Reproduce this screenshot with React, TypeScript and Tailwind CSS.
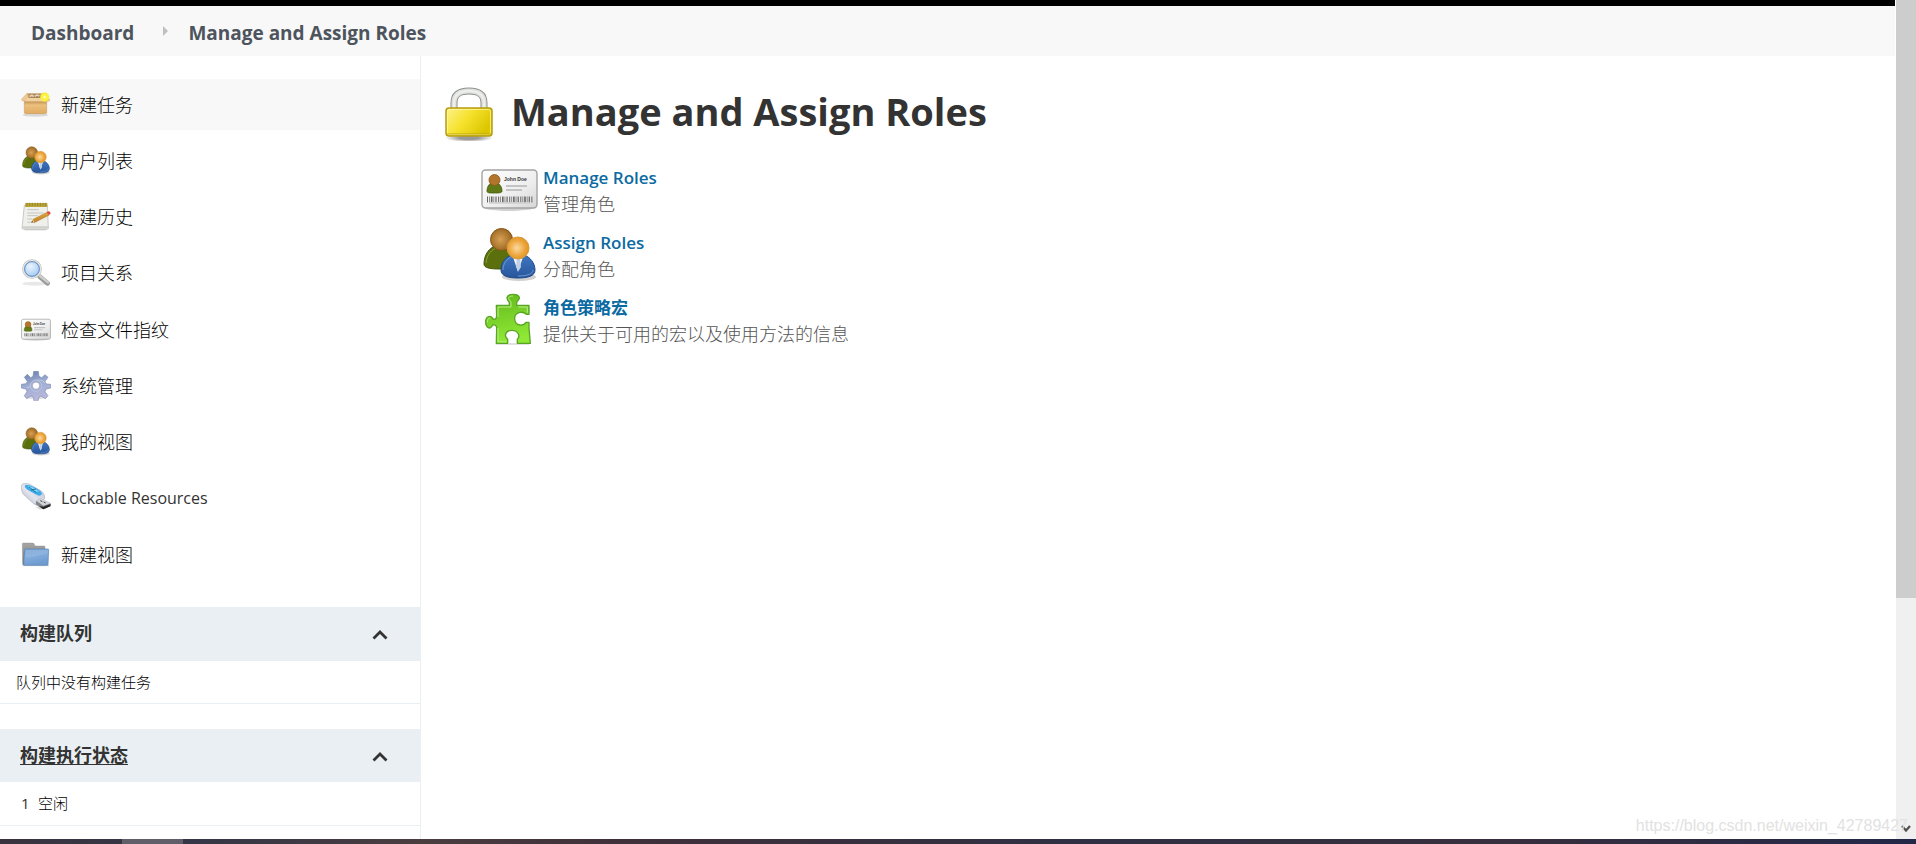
import React from 'react';

const NewItemIcon = () => (
  <svg viewBox="0 0 90 90" className="size-full" aria-hidden="true">
    <defs>
      <linearGradient id="boxFront" x1="0" y1="0" x2="0" y2="1">
        <stop offset="0" stopColor="#c4924f" />
        <stop offset="0.3" stopColor="#ecc07e" />
        <stop offset="1" stopColor="#dfab62" />
      </linearGradient>
      <radialGradient id="boxGlow">
        <stop offset="0" stopColor="#fffde0" />
        <stop offset="0.4" stopColor="#fff23a" />
        <stop offset="0.7" stopColor="#f8ef3c" />
        <stop offset="1" stopColor="#f8ef3c" stopOpacity="0" />
      </radialGradient>
    </defs>
    <ellipse cx="43" cy="75" rx="38" ry="5" fill="#000" opacity="0.12" />
    <path d="M19 10h48l8 22H12z" fill="#cfa066" />
    <path d="M25 12h34l5 12H20z" fill="#a9865c" />
    <path d="M26 20q7-8 12 0M42 19q7-8 13 0" stroke="#e8d9bd" strokeWidth="5" fill="none" />
    <path d="M10 34h67v33q0 4-4 4H14q-4 0-4-4z" fill="url(#boxFront)" stroke="#c39455" strokeWidth="1.5" />
    <path d="M18 10 2 27q-2 5 4 6l6 1 12-9z" fill="#edc896" stroke="#c99b62" />
    <path d="M68 14l18 14q2 5-4 6l-6 1-12-10z" fill="#edc896" stroke="#c99b62" />
    <path d="M20 24h47l8 10H12z" fill="#f2d1a0" />
    <circle cx="71" cy="21" r="16" fill="url(#boxGlow)" />
  </svg>
);

const UsersIcon = () => (
  <svg viewBox="0 0 57 57" className="size-full" aria-hidden="true">
    <defs>
      <radialGradient id="backHead" cx="0.45" cy="0.5" r="0.6">
        <stop offset="0" stopColor="#d9a055" />
        <stop offset="1" stopColor="#92601b" />
      </radialGradient>
      <radialGradient id="frontHead" cx="0.45" cy="0.5" r="0.6">
        <stop offset="0" stopColor="#fbd9a0" />
        <stop offset="0.6" stopColor="#eda63c" />
        <stop offset="1" stopColor="#dd8f1d" />
      </radialGradient>
      <linearGradient id="frontBody" x1="0" y1="0" x2="0" y2="1">
        <stop offset="0" stopColor="#3f78c2" />
        <stop offset="1" stopColor="#28559b" />
      </linearGradient>
    </defs>
    <ellipse cx="38" cy="50" rx="17" ry="4" fill="#000" opacity="0.18" />
    <path d="M3 37c0-10 6-17 12-18h10c6 2 10 8 10 16 0 5-6 7-16 7S3 41 3 37z" fill="#5b6f0d" stroke="#43540a" />
    <path d="M5 36c1-9 6-14 11-15" stroke="#8ca238" fill="none" />
    <circle cx="20.5" cy="12.5" r="11" fill="url(#backHead)" stroke="#855615" />
    <path d="M20 43c0-9 6-14 12-15h11c6 2 11 8 11 15 0 6-7 8-17 8s-17-2-17-8z" fill="url(#frontBody)" stroke="#204a87" />
    <path d="M22 43c0-7 4-11 8-13M52 43c0 4-6 6-15 6" stroke="#6b9ad6" fill="none" />
    <path d="M32 30h10l-5 15z" fill="#f1f4fa" />
    <path d="M36 31h3l1 9-2.500 4-2.500-4z" fill="#c2d0e6" />
    <circle cx="37" cy="21" r="11" fill="url(#frontHead)" stroke="#d99a3c" />
  </svg>
);

const NotepadIcon = () => (
  <svg viewBox="0 0 90 90" className="size-full" aria-hidden="true">
    <defs>
      <linearGradient id="padPencil" x1="0" y1="0" x2="0.4" y2="1">
        <stop offset="0" stopColor="#f2b955" />
        <stop offset="1" stopColor="#b97a1d" />
      </linearGradient>
    </defs>
    <path d="M8 82h70l-4 3H12z" fill="#c4c4c2" />
    <path d="M10 10h69l3 68q0 3-3 3H6q-3 0-3-3z" fill="#efefec" stroke="#b2b2ae" strokeWidth="2" />
    <path d="M4 73h78l1 6H4z" fill="#cfcfcb" />
    <path d="M13 3h66v12H12z" fill="#b9a53c" />
    <path d="M18 2v10M26 2v10M34 2v10M42 2v10M50 2v10M58 2v10M66 2v10M74 2v10" stroke="#8c7a1e" strokeWidth="2" />
    <path d="M19 23h34M19 33h48M19 41h32M19 51h14M19 61h9" stroke="#bcbcba" strokeWidth="2.500" />
    <path d="M32 61l8 1 44-22-5-10-43 22z" fill="url(#padPencil)" stroke="#a5752a" />
    <path d="M30 62l6-10 4 9z" fill="#e8cf9e" />
    <path d="M30 62l4-6 2 4z" fill="#44413a" />
    <path d="M77 31l5-3q6 0 7 6l-5 6z" fill="#dd4a44" />
  </svg>
);

const SearchIcon = () => (
  <svg viewBox="0 0 90 90" className="size-full" aria-hidden="true">
    <defs>
      <radialGradient id="lens" cx="0.4" cy="0.35" r="0.7">
        <stop offset="0" stopColor="#eaf5ff" />
        <stop offset="0.6" stopColor="#bcd8f4" />
        <stop offset="1" stopColor="#94bce8" />
      </radialGradient>
    </defs>
    <ellipse cx="42" cy="77" rx="38" ry="6" fill="#000" opacity="0.09" />
    <path d="M56 56l24 20" stroke="#9a9a98" strokeWidth="14" strokeLinecap="round" />
    <path d="M57 54l24 19" stroke="#cfcfcd" strokeWidth="7" strokeLinecap="round" />
    <circle cx="33" cy="33" r="26" fill="url(#lens)" stroke="#bcbebd" strokeWidth="7" />
    <circle cx="33" cy="33" r="26" fill="none" stroke="#e4e4e2" strokeWidth="4" />
    <circle cx="33" cy="33" r="22" fill="none" stroke="#5c90cc" strokeWidth="3" />
  </svg>
);

const CardIcon = () => (
  <svg viewBox="0 0 57 57" className="size-full" aria-hidden="true">
    <defs>
      <linearGradient id="cardFace" x1="0" y1="0" x2="1" y2="1">
        <stop offset="0" stopColor="#ffffff" />
        <stop offset="0.6" stopColor="#eeeeee" />
        <stop offset="1" stopColor="#d6d6d6" />
      </linearGradient>
    </defs>
    <ellipse cx="28" cy="46" rx="24" ry="3" fill="#000" opacity="0.18" />
    <rect x="1" y="8" width="55" height="38" rx="3.500" fill="url(#cardFace)" stroke="#a3a3a2" strokeWidth="1.400" />
    <path d="M6 29c0-5 3-8 5-8h5c3 1 5 4 5 8 0 2-3 2-8 2s-7 0-7-2z" fill="#5f7a17" stroke="#46590c" strokeWidth="0.800" />
    <circle cx="13.500" cy="18" r="5.500" fill="#b2752b" stroke="#8a5416" strokeWidth="0.800" />
    <text x="23" y="19" fontSize="5" fontWeight="700" fill="#333" fontFamily="Liberation Sans, sans-serif">
      John Doe
    </text>
    <path d="M25 24h21M25 28h16" stroke="#c3c3c3" strokeWidth="2" />
    <path d="M6 37.500h46" stroke="#666" strokeWidth="6" strokeDasharray="1 1.200 0.700 1 1.600 1 0.700 1.200 1.200 1.500" />
    <path d="M8 41h41" stroke="#cfcfcf" strokeWidth="1.500" />
  </svg>
);

const GearIcon = () => (
  <svg viewBox="0 0 90 90" className="size-full" aria-hidden="true">
    <defs>
      <linearGradient id="gearFill" x1="0.2" y1="0" x2="0.5" y2="1">
        <stop offset="0" stopColor="#6580ae" />
        <stop offset="0.45" stopColor="#a0aed4" />
        <stop offset="1" stopColor="#bcb9dd" />
      </linearGradient>
    </defs>
    <ellipse cx="45" cy="78" rx="30" ry="7" fill="#000" opacity="0.12" />
    <path
      d="M38 1h14l2 15 8 4 10-9 9 8-9 12 4 8 13 1v11l-14 3-3 8 9 12-8 9-13-8-6 3-4 15H40l-3-15-7-3-13 8-7-9 8-12-3-8-14-3V40l14-2 4-7-9-12 9-9 10 10 7-4z"
      fill="url(#gearFill)"
      stroke="#808bb0"
      strokeWidth="2"
      strokeLinejoin="round"
    />
    <path d="M17 50c12 2 14-17 30-22 12-3 22 2 26 8" stroke="#dfe5f4" strokeWidth="3" fill="none" opacity="0.5" />
    <circle cx="45" cy="44" r="17" fill="#a4aed2" stroke="#c6cde6" strokeWidth="2" />
    <circle cx="45" cy="44" r="11" fill="#fff" stroke="#8c97bc" strokeWidth="2" />
  </svg>
);

const UsbIcon = () => (
  <svg viewBox="0 0 90 90" className="size-full" aria-hidden="true">
    <defs>
      <linearGradient id="usbBody" x1="0" y1="1" x2="1" y2="0">
        <stop offset="0" stopColor="#a2a7b3" />
        <stop offset="0.45" stopColor="#e2e5ee" />
        <stop offset="1" stopColor="#b6bccb" />
      </linearGradient>
    </defs>
    <path d="M44 72l40-8-6 12-22 4z" fill="#000" opacity="0.15" />
    <path d="M2 6C4 0 16 0 26 4l32 18c8 5 14 14 13 24L55 68c-8 1-17-5-24-12L7 34C1 26 0 12 2 6z" fill="url(#usbBody)" stroke="#a2a8b8" strokeWidth="1.500" />
    <path d="M13 7c8-3 20 2 32 9s20 13 17 18-9 6-18 0L21 21C14 16 9 10 13 7z" fill="#3cabea" />
    <path d="M20 9c12 1 26 10 34 17-10 2-22-2-34-17z" fill="#7fdcfb" />
    <path d="M24 12l22 17M30 21l15-3" stroke="#1b5e8f" strokeWidth="2.500" />
    <path d="M58 46l31 15-1 9-21 9-23-15 2-11z" fill="#83868a" />
    <path d="M58 46l31 15-22 7-21-15z" fill="#d3d5d8" />
    <path d="M53 69l14 2 22-8-1 7-21 9z" fill="#222" />
    <path d="M58 53l6 3M68 57l6 3" stroke="#444" strokeWidth="3" />
  </svg>
);

const FolderIcon = () => (
  <svg viewBox="0 0 90 90" className="size-full" aria-hidden="true">
    <defs>
      <linearGradient id="folderFront" x1="0" y1="0" x2="0.3" y2="1">
        <stop offset="0" stopColor="#7ba7d8" />
        <stop offset="0.5" stopColor="#82acdc" />
        <stop offset="1" stopColor="#6f9bd0" />
      </linearGradient>
      <linearGradient id="folderBack" x1="0" y1="0" x2="0" y2="1">
        <stop offset="0" stopColor="#a6a6a4" />
        <stop offset="1" stopColor="#747472" />
      </linearGradient>
    </defs>
    <path d="M4 77h80" stroke="#000" strokeWidth="3" opacity="0.15" />
    <path d="M4 11q0-2 3-2h28q4 0 5 4l2 5h27q3 0 3 3v54H8q-3 0-3-3z" fill="url(#folderBack)" stroke="#80807e" />
    <path d="M13 27h68q2 0 2 2l-2 45q0 2-3 2H9q-2 0-1-3l3-44q0-2 2-2z" fill="url(#folderFront)" stroke="#5884bb" strokeWidth="2" />
    <path d="M13 52q30 0 67-14v-8H14z" fill="#fff" opacity="0.1" />
  </svg>
);

const LockIcon = () => (
  <svg viewBox="0 0 56 56" className="size-full" aria-hidden="true">
    <defs>
      <linearGradient id="lockBody" x1="0" y1="0" x2="1" y2="0.5">
        <stop offset="0" stopColor="#fcf18c" />
        <stop offset="0.5" stopColor="#f6e22d" />
        <stop offset="1" stopColor="#dcc600" />
      </linearGradient>
      <radialGradient id="lockShadow">
        <stop offset="0.4" stopColor="#000" stopOpacity="0.4" />
        <stop offset="1" stopColor="#000" stopOpacity="0" />
      </radialGradient>
    </defs>
    <ellipse cx="28" cy="53" rx="24" ry="4" fill="url(#lockShadow)" />
    <path d="M13 27V18C13 9 19 6 28 6s15 3 15 12v9" fill="none" stroke="#8f918d" strokeWidth="7" />
    <path d="M13 27V18C13 9 19 6 28 6s15 3 15 12v9" fill="none" stroke="#dfe1dd" strokeWidth="5" />
    <path d="M13 27V18C13 9 19 6 28 6s15 3 15 12v9" fill="none" stroke="#eeefed" strokeWidth="2" />
    <rect x="5" y="23" width="46" height="28" rx="3" fill="url(#lockBody)" stroke="#b69d10" strokeWidth="1.500" />
    <rect x="6.500" y="24.500" width="43" height="25" rx="2" fill="none" stroke="#fff9a8" strokeWidth="1" opacity="0.700" />
    <path d="M6 48h44q0 2-2 2H8q-2 0-2-2z" fill="#b39b00" opacity="0.400" />
  </svg>
);

const PuzzleIcon = () => (
  <svg viewBox="0 0 171 171" className="size-full" aria-hidden="true">
    <defs>
      <linearGradient id="puzzleFill" x1="0" y1="0" x2="0.2" y2="1">
        <stop offset="0" stopColor="#62b81c" />
        <stop offset="1" stopColor="#8fe835" />
      </linearGradient>
    </defs>
    <path d="M44 156h100" stroke="#000" strokeWidth="4" opacity="0.15" />
    <path
      d="M46 40H85V32C81 27 77 22 78 16C80 9 87 7 96 7S113 9 115 16C116 22 110 26 107 31V40H144V67H136C131 62 125 60 117 61C106 63 101 70 101 79C101 90 107 98 117 99C125 100 131 97 135 91H144V108L148 154H109V142C113 138 115 132 112 126C108 118 101 115 93 115S77 118 74 126C72 133 75 138 80 142V154H46L47 110C48 104 43 98 38 98C33 99 32 106 27 108C20 109 14 102 14 91C14 80 19 73 27 73C33 73 34 80 38 82C43 82 47 77 47 71Z"
      fill="url(#puzzleFill)"
      stroke="#5aa526"
      strokeWidth="4"
      strokeLinejoin="round"
    />
    <path d="M51 75V45H90V30C86 25 82 21 83 17C85 13 89 12 96 12M112 45H139V62M19 91C19 83 22 78 27 78M51 108V149H75" fill="none" stroke="#b6ee84" strokeWidth="3" />
  </svg>
);

const tasks = [
  { label: '新建任务', Icon: NewItemIcon },
  { label: '用户列表', Icon: UsersIcon },
  { label: '构建历史', Icon: NotepadIcon },
  { label: '项目关系', Icon: SearchIcon },
  { label: '检查文件指纹', Icon: CardIcon },
  { label: '系统管理', Icon: GearIcon },
  { label: '我的视图', Icon: UsersIcon },
  { label: 'Lockable Resources', Icon: UsbIcon, latin: true },
  { label: '新建视图', Icon: FolderIcon },
];

const roleLinks = [
  { title: 'Manage Roles', text: '管理角色', Icon: CardIcon },
  { title: 'Assign Roles', text: '分配角色', Icon: UsersIcon },
  { title: '角色策略宏', text: '提供关于可用的宏以及使用方法的信息', Icon: PuzzleIcon },
];

const CollapseButton = ({ label }: { label: string }) => (
  <button type="button" aria-label={label} className="flex size-6 items-center justify-center pt-1">
    <svg viewBox="0 0 16 10" className="h-2.5 w-4" aria-hidden="true">
      <path d="M1.500 8.500 8 2l6.500 6.500" fill="none" stroke="#333" strokeWidth="2.800" />
    </svg>
  </button>
);

const Sidebar = () => (
  <aside className="w-[421px] shrink-0 border-r border-[#e9eff3] pt-[23px]">
    <nav>
      <ul className="flex min-h-[501px] flex-col justify-between">
        {tasks.map(({ label, Icon, latin }, i) => (
          <li key={label}>
            <a
              href="#"
              className={`flex h-[51px] items-center gap-2.5 pl-[21px] ${i === 0 ? 'bg-[#f8f8f8]' : ''}`}
            >
              <span className="size-[30px]">
                <Icon />
              </span>
              <span className={latin ? 'text-base text-[#333]' : 'font-light text-black'}>{label}</span>
            </a>
          </li>
        ))}
      </ul>
    </nav>

    <section className="mt-[27px]">
      <div className="flex h-[54px] items-center justify-between bg-[#e9eff2] pr-7 pb-0.5 pl-5">
        <h2 className="font-bold text-[#333]">构建队列</h2>
        <CollapseButton label="构建队列" />
      </div>
      <p className="flex h-[43px] items-center border-b border-[#e9eff3] pl-4 text-[15px] font-light text-black">
        队列中没有构建任务
      </p>
    </section>

    <section className="mt-[25px]">
      <div className="flex h-[53px] items-center justify-between bg-[#e9eff2] pr-7 pb-0.5 pl-5">
        <h2 className="font-bold text-[#333]">
          <a href="#" className="underline underline-offset-2">
            构建执行状态
          </a>
        </h2>
        <CollapseButton label="构建执行状态" />
      </div>
      <table className="w-full border-b border-[#e9eff3] text-left text-[15px]">
        <tbody>
          <tr className="h-[43px]">
            <td className="w-[38px] pl-[21px] text-[#333]">1</td>
            <td className="font-light text-black">空闲</td>
          </tr>
        </tbody>
      </table>
    </section>
  </aside>
);

const App = () => {
  return (
    <div className="relative flex min-h-screen flex-col bg-white font-['Open_Sans','Noto_Sans_CJK_SC',sans-serif] text-lg leading-6">
      <div className="flex flex-1">
        <div className="mr-px flex min-w-0 flex-1 flex-col">
          <div className="h-1.5 bg-black" />
          <header className="bg-[#f8f8f8]">
            <ol className="flex h-[50px] items-center pt-1 pl-[31px] text-[19px] font-bold text-[#4d545d]">
              <li>
                <a href="#">Dashboard</a>
              </li>
              <li aria-hidden="true" className="mr-5 ml-[29px]">
                <svg viewBox="0 0 5 10" className="mb-1 h-2.5 w-[5px]">
                  <path d="M0 0l5 5-5 5z" fill="#bfbfbf" />
                </svg>
              </li>
              <li>
                <a href="#">Manage and Assign Roles</a>
              </li>
            </ol>
          </header>

          <div className="flex flex-1">
            <Sidebar />
            <main className="min-w-0 flex-1 pt-7 pl-5">
              <h1 className="flex items-center gap-3.5 text-[38px] leading-[54px] font-bold text-[#333]">
                <span className="size-14">
                  <LockIcon />
                </span>
                <span className="pb-1">Manage and Assign Roles</span>
              </h1>
              <ul className="mt-5 flex flex-col gap-2 pl-10">
                {roleLinks.map(({ title, text, Icon }) => (
                  <li key={title} className="flex items-center gap-[5px]">
                    <span className="size-[57px]">
                      <Icon />
                    </span>
                    <div className="leading-[26px]">
                      <a href="#" className="block text-[17px] font-semibold text-[#0b6aa2]">
                        {title}
                      </a>
                      <p className="font-light text-[#555]">{text}</p>
                    </div>
                  </li>
                ))}
              </ul>
            </main>
          </div>
        </div>

        <div className="flex w-5 flex-col justify-between bg-[#f0f0f0]">
          <div className="h-[598px] bg-[#cdcdcd]" />
          <svg viewBox="0 0 10 8" className="mx-auto mb-1.5 h-2 w-2.5" aria-hidden="true">
            <path d="M1 1l4 4.500L9 1" fill="none" stroke="#505050" strokeWidth="2.200" />
          </svg>
        </div>
      </div>

      <div className="h-[5px] bg-[linear-gradient(to_right,#3a333f,#343647_10%,#4a3d40_22%,#40303a_32%,#2f3044_57%,#382f3e_78%,#232848)]">
        <div className="ml-[122px] h-full w-[61px] bg-[#605e69]" />
      </div>

      <p className="pointer-events-none absolute right-2 bottom-1.5 font-['Liberation_Sans',sans-serif] text-base text-[#e2e2e2]">
        https://blog.csdn.net/weixin_42789427
      </p>
    </div>
  );
};

export default App;
